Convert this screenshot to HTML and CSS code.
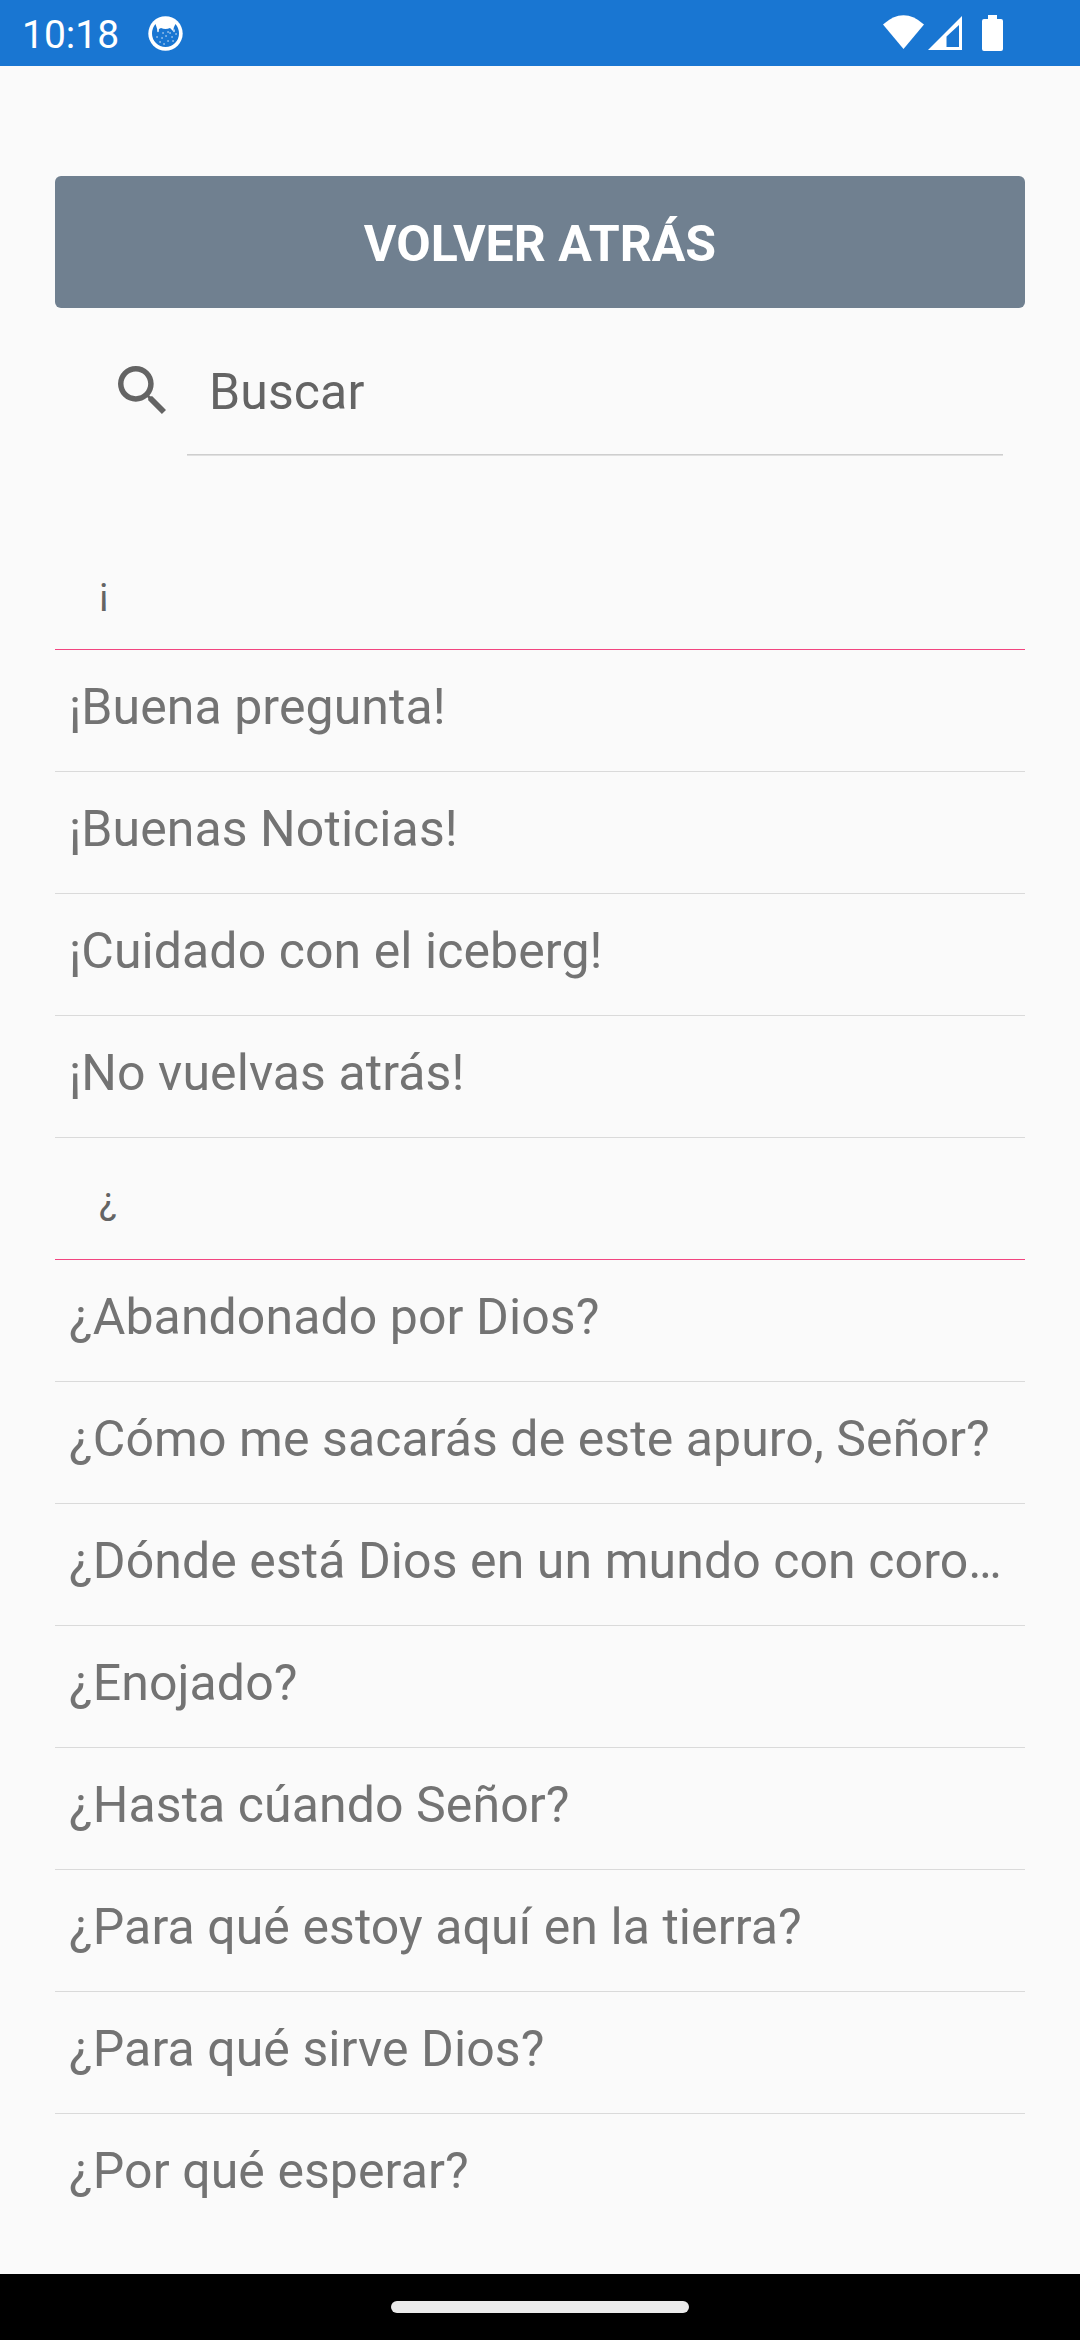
FILE: index.html
```html
<!DOCTYPE html>
<html lang="es">
<head>
<meta charset="utf-8">
<title>Buscar</title>
<link rel="stylesheet" href="styles.css">
</head>
<body>
<header class="status">
  <span class="clock">10:18</span>
  <svg class="cat" viewBox="0 0 35 35"><circle cx="17.500" cy="17.500" r="17.200" fill="#fff"/><path fill="#1976d2" d="M7.500 8Q4 12 4 17.500a13.500 13.500 0 0 0 27 0Q31 12 27.500 8L26 11l-1 4-2-2-1-1q-4.500 2-9 0l-2 1-1 3-1.500-5z"/><path stroke="#fff" stroke-width="1.500" stroke-linecap="round" d="M10 14v1.500M26 14v1.500M15 17h.1M20 16h.1M22 17h.1M9 21h.1M14 22h.1M18 20h.1M24 21h.1M28 18h.1M12 26h.1M20 25h.1M16 28h.1M25 25h.1" opacity=".85"/></svg>
  <svg class="wifi" viewBox="0 0 41 34"><path fill="#fff" d="M0 9.500Q20.500-9 41 9.500L20.500 34z"/></svg>
  <svg class="signal" viewBox="0 0 34 34"><path fill="#fff" fill-rule="evenodd" d="M34 0v34H0zM31 9v22H18.500V20.500z"/></svg>
  <svg class="battery" viewBox="0 0 21 36"><path fill="#fff" d="M6 0h9v4h4q2 0 2 2v28q0 2-2 2H2q-2 0-2-2V6q0-2 2-2h4z"/></svg>
</header>
<main class="page">
  <button class="back">VOLVER ATRÁS</button>
  <div class="search">
    <svg class="lens" viewBox="3 3 17.490 17.490"><path fill="#646464" d="M15.500 14h-.79l-.28-.27A6.471 6.471 0 0 0 16 9.500 6.500 6.500 0 1 0 9.500 16c1.610 0 3.090-.59 4.230-1.570l.27.28v.79l5 4.990L20.490 19l-4.990-5zm-6 0C7.010 14 5 11.990 5 9.500S7.010 5 9.500 5 14 7.010 14 9.500 11.990 14 9.500 14z"/></svg>
    <div class="field">Buscar</div>
  </div>
  <div class="list">
    <div class="group">¡</div>
    <div class="item">¡Buena pregunta!</div>
    <div class="item">¡Buenas Noticias!</div>
    <div class="item">¡Cuidado con el iceberg!</div>
    <div class="item">¡No vuelvas atrás!</div>
    <div class="group">¿</div>
    <div class="item">¿Abandonado por Dios?</div>
    <div class="item">¿Cómo me sacarás de este apuro, Señor?</div>
    <div class="item">¿Dónde está Dios en un mundo con coro…</div>
    <div class="item">¿Enojado?</div>
    <div class="item">¿Hasta cúando Señor?</div>
    <div class="item">¿Para qué estoy aquí en la tierra?</div>
    <div class="item">¿Para qué sirve Dios?</div>
    <div class="item">¿Por qué esperar?</div>
  </div>
</main>
<footer class="nav"><div class="pill"></div></footer>
</body>
</html>
```
FILE: styles.css
```css
* { box-sizing: border-box; }
body { margin: 0; width: 1080px; height: 2340px; overflow: hidden; display: flex; flex-direction: column; background: #fafafa; font-family: Roboto, sans-serif; }
.status { height: 66px; flex: none; display: flex; align-items: flex-start; background: #1976d2; color: #fff; padding-left: 22px; }
.clock { font-size: 39px; line-height: 66px; width: 126px; padding-top: 2px; }
.cat { width: 35px; height: 35px; margin-top: 16px; }
.wifi { width: 41px; height: 34px; margin: 15px 0 0 700px; }
.signal { width: 34px; height: 34px; margin: 15.500px 0 0 3.500px; }
.battery { width: 21px; height: 36px; margin: 15px 0 0 20.500px; }
.page { flex: 1; min-height: 0; overflow: hidden; padding: 110px 55px 0; }
.back { display: block; width: 970px; height: 132px; padding: 4px 0 0; border: 0; border-radius: 6px; background: #708090; color: #fff; font: bold 50px Roboto, sans-serif; }
.search { display: flex; height: 148px; padding: 0 22px 0 63px; }
.lens { width: 48px; height: 48px; margin-top: 58px; }
.field { margin-left: 21px; flex: 1; border-bottom: 1px solid #e0e0e0; box-shadow: inset 0 -1px #cecece; padding: 54px 22px 0; font-size: 50px; line-height: 60px; letter-spacing: .1px; color: #646464; }
.list { margin-top: 72px; }
.group { height: 122px; border-bottom: 1px solid #f24580; padding: 39px 44px 0; font-size: 38.500px; line-height: 48px; color: #646464; }
.item { height: 122px; border-bottom: 1px solid #dadada; padding: 27px 14px 0; font-size: 50px; line-height: 60px; letter-spacing: .08px; color: #737373; white-space: nowrap; }
.item:last-child { border-bottom: 0; }
.nav { height: 66px; flex: none; display: flex; align-items: center; justify-content: center; background: #000; }
.pill { width: 298px; height: 12px; border-radius: 6px; background: #ebebeb; }
```
